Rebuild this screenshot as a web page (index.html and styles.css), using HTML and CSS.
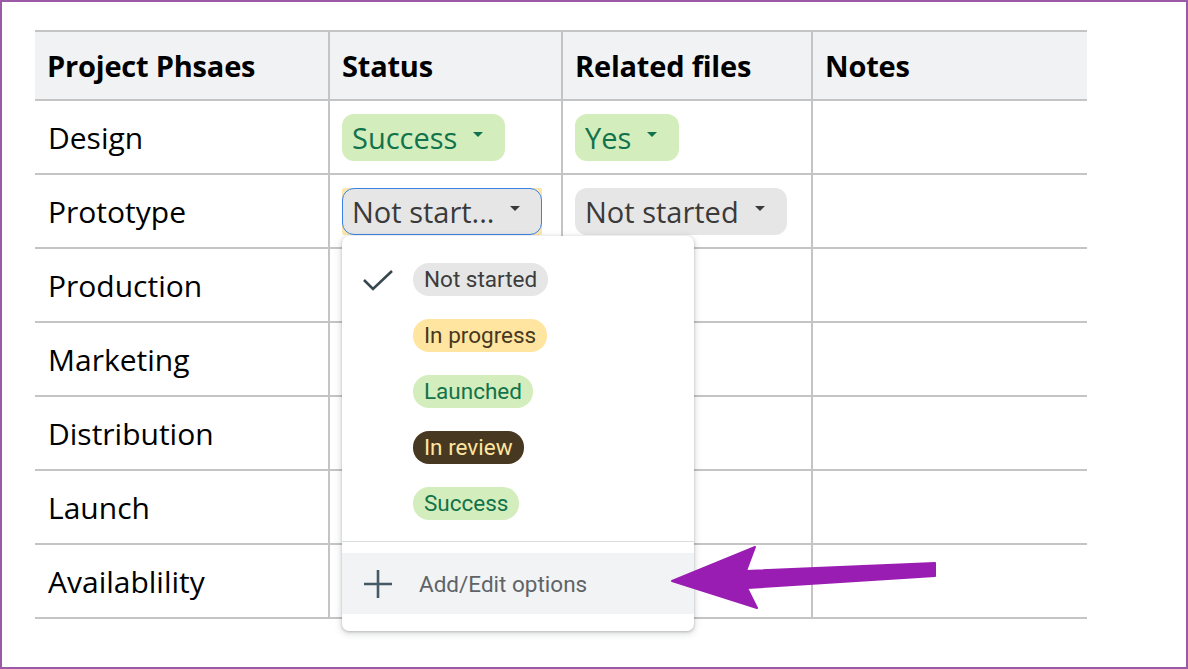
FILE: index.html
```html
<!DOCTYPE html>
<html>
<head>
<meta charset="utf-8">
<link rel="stylesheet" href="styles.css">
</head>
<body>
<div class="frame">
  <table class="sheet">
    <colgroup>
      <col class="c1"><col class="c2"><col class="c3"><col class="c4">
    </colgroup>
    <thead>
      <tr>
        <th>Project Phsaes</th>
        <th>Status</th>
        <th>Related files</th>
        <th>Notes</th>
      </tr>
    </thead>
    <tbody>
      <tr>
        <td>Design</td>
        <td><span class="chip green">Success <span class="caret"></span></span></td>
        <td><span class="chip green">Yes <span class="caret"></span></span></td>
        <td></td>
      </tr>
      <tr>
        <td>Prototype</td>
        <td><span class="sel"><span class="chip gray active">Not start... <span class="caret"></span></span></span></td>
        <td><span class="chip gray">Not started <span class="caret"></span></span></td>
        <td></td>
      </tr>
      <tr><td>Production</td><td></td><td></td><td></td></tr>
      <tr><td>Marketing</td><td></td><td></td><td></td></tr>
      <tr><td>Distribution</td><td></td><td></td><td></td></tr>
      <tr><td>Launch</td><td></td><td></td><td></td></tr>
      <tr><td>Availablility</td><td></td><td></td><td></td></tr>
    </tbody>
  </table>

  <div class="menu">
    <ul class="options">
      <li>
        <svg class="check" viewBox="0 0 32 24" width="32" height="24"><path d="M2 12 L11 21 L30 3" fill="none" stroke="#37474f" stroke-width="2.6"/></svg>
        <span class="opt gray">Not started</span>
      </li>
      <li><span class="opt yellow">In progress</span></li>
      <li><span class="opt green">Launched</span></li>
      <li><span class="opt brown">In review</span></li>
      <li><span class="opt green">Success</span></li>
    </ul>
    <div class="divider"></div>
    <div class="add">
      <svg class="plus" viewBox="0 0 28 28" width="28" height="28"><path d="M14 0 V28 M0 14 H28" fill="none" stroke="#455a64" stroke-width="2.6"/></svg>
      <span>Add/Edit options</span>
    </div>
  </div>

  <svg class="arrow" width="1188" height="669" viewBox="0 0 1188 669">
    <polygon points="672,581 755,547 746,571 935,563 935,576 747,588 757,608" fill="#9a1db3" stroke="#9a1db3" stroke-width="2" stroke-linejoin="round"/>
  </svg>
</div>
</body>
</html>
```

FILE: styles.css
```css
* { box-sizing: border-box; }
html, body { margin: 0; padding: 0; background: #fff; }
.frame {
  position: relative;
  width: 1188px;
  height: 669px;
  border: 2px solid #9b59a8;
  padding: 28px 0 0 33px;
  font-family: "Open Sans", Lato, sans-serif;
  overflow: hidden;
}
.sheet {
  border-collapse: collapse;
  table-layout: fixed;
  width: 1052px;
  color: #000;
}
.c1 { width: 294px; }
.c2 { width: 233px; }
.c3 { width: 250px; }
.c4 { width: 275px; }
.sheet th, .sheet td {
  border: 2px solid #c4c4c4;
  text-align: left;
  padding: 0 0 0 12px;
  font-size: 28px;
  vertical-align: middle;
}
.sheet th:first-child, .sheet td:first-child { border-left: none; }
.sheet th:last-child, .sheet td:last-child { border-right: none; }
.sheet th {
  background: #f1f2f4;
  height: 69px;
  font-weight: 700;
  font-size: 29px;
  letter-spacing: -0.2px;
}
.sheet td { height: 74px; font-weight: 400; font-size: 30px; }
.sheet td:first-child { padding-left: 13px; }
.chip {
  display: inline-flex;
  align-items: center;
  height: 47px;
  padding: 0 22px 0 10px;
  border-radius: 12px;
  font-size: 29px;
  line-height: 1;
}
.chip .caret {
  display: inline-block;
  margin-left: 16px;
  width: 0; height: 0;
  border-left: 5px solid transparent;
  border-right: 5px solid transparent;
  border-top: 5px solid currentColor;
  position: relative;
  top: -3px;
}
.chip.green { background: #d4edbc; color: #11734b; }
.chip.gray { background: #e6e6e6; color: #3a3a3a; }
.chip.active { border: 1.5px solid #3b82e6; padding-left: 9px; padding-right: 21px; }
.sel { display: inline-block; background: #fbe7ad; border-radius: 2px; line-height: 0; }
.sel .chip { line-height: 1; }

.menu {
  position: absolute;
  left: 340px;
  top: 234px;
  width: 352px;
  height: 395px;
  background: #fff;
  border-radius: 7px;
  box-shadow: 0 1px 3px rgba(60,64,67,0.3), 0 2px 6px 2px rgba(60,64,67,0.12);
  font-family: Roboto, "Noto Sans", sans-serif;
  padding-top: 15px;
}
.options { list-style: none; margin: 0; padding: 0; }
.options li {
  position: relative;
  height: 56px;
  display: flex;
  align-items: center;
  padding-left: 71px;
}
.check { position: absolute; left: 20px; top: 17px; }
.opt {
  display: inline-block;
  font-size: 22.5px;
  line-height: 33px;
  height: 33px;
  padding: 0 11px;
  border-radius: 16px;
}
.opt.gray { background: #e6e6e6; color: #3c3c3c; }
.opt.yellow { background: #ffe59f; color: #473821; }
.opt.green { background: #d4edbc; color: #11734b; }
.opt.brown { background: #473821; color: #ffe59f; }
.divider { height: 1px; background: #dadce0; margin-top: 10px; }
.add {
  margin-top: 11px;
  height: 61px;
  background: #f1f3f4;
  display: flex;
  align-items: center;
  padding-left: 22px;
  color: #5f6368;
  font-size: 22.5px;
}
.add span { margin-left: 27px; }
.arrow { position: absolute; left: -2px; top: -2px; pointer-events: none; }
```
